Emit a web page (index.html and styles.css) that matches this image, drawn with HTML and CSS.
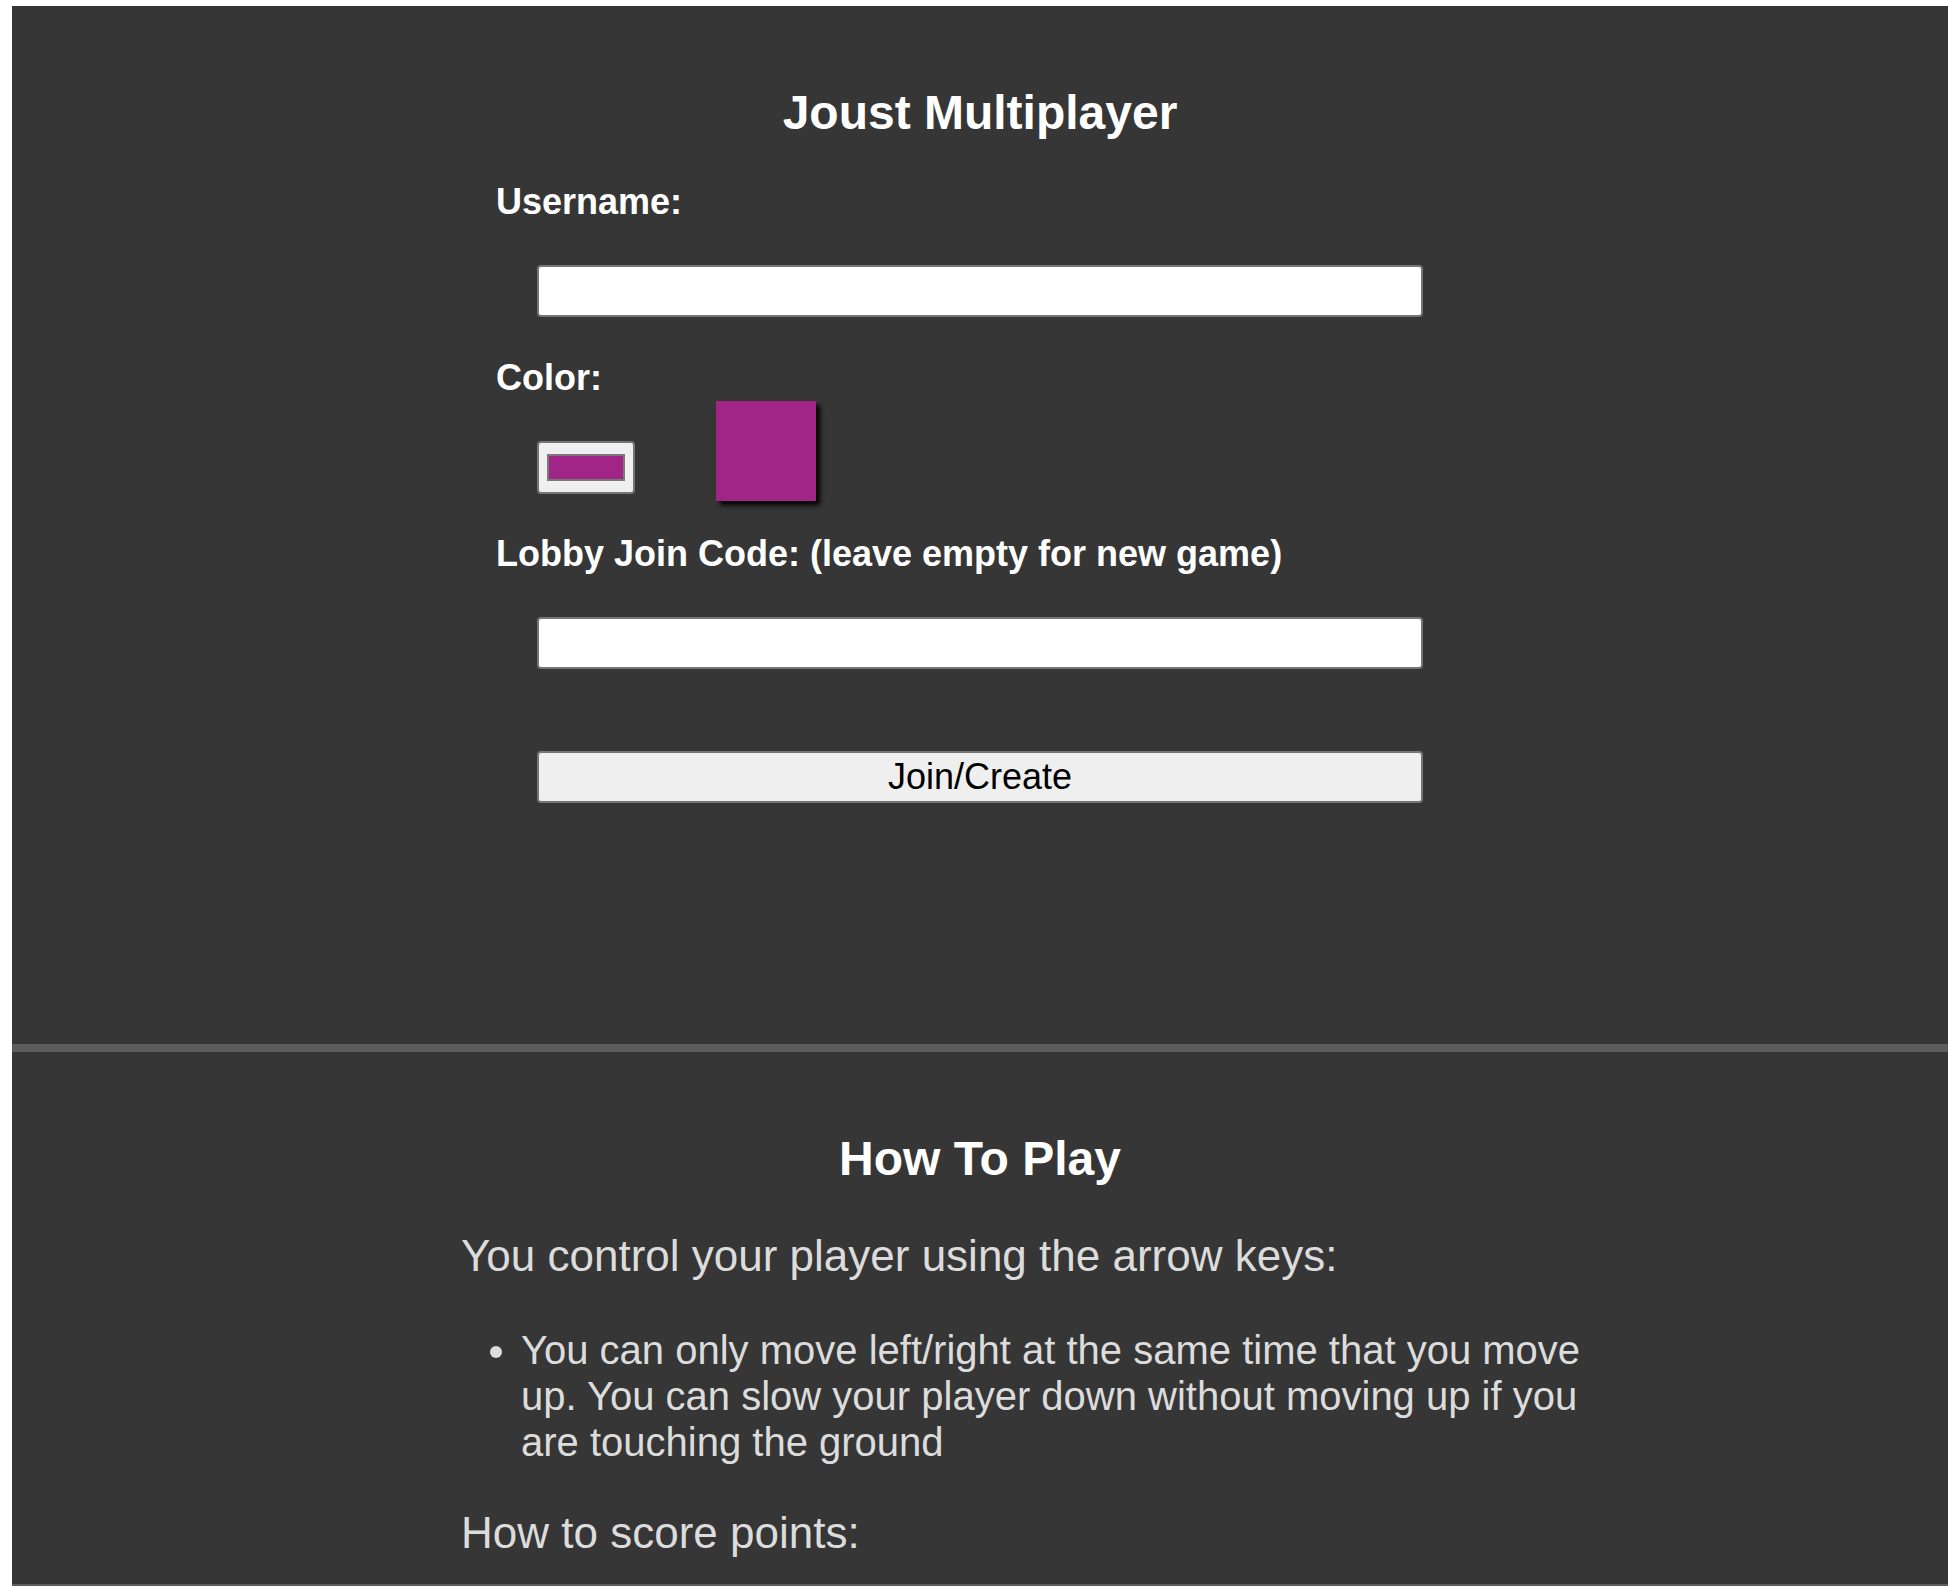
FILE: index.html
```html
<!DOCTYPE html>
<html lang="en">
<head>
<meta charset="utf-8">
<title>Joust Multiplayer</title>
<link rel="stylesheet" href="styles.css">
</head>
<body>
<main class="page">
  <section class="panel join-panel">
    <h1 class="panel-title">Joust Multiplayer</h1>
    <form class="join-form">
      <label class="field-label" for="username">Username:</label>
      <input class="text-input" id="username" type="text">

      <label class="field-label" for="color">Color:</label>
      <div class="color-row">
        <div class="color-input" id="color"><span class="color-swatch"></span></div>
        <div class="color-preview"></div>
      </div>

      <label class="field-label" for="lobby">Lobby Join Code: (leave empty for new game)</label>
      <input class="text-input" id="lobby" type="text">

      <button class="join-button" type="button">Join/Create</button>
    </form>
  </section>

  <section class="panel howto-panel">
    <h2 class="panel-title">How To Play</h2>
    <div class="howto-content">
      <p class="howto-text">You control your player using the arrow keys:</p>
      <ul class="howto-list">
        <li>You can only move left/right at the same time that you move up. You can slow your player down without moving up if you are touching the ground</li>
      </ul>
      <p class="howto-text">How to score points:</p>
    </div>
  </section>
</main>
</body>
</html>
```

FILE: styles.css
```css
html, body {
  margin: 0;
  padding: 0;
  background: #ffffff;
}

body {
  padding: 6px 10px 0 12px;
  font-family: "Liberation Sans", Arial, Helvetica, sans-serif;
}

.page {
  display: flex;
  flex-direction: column;
}

.panel {
  background: #363636;
  border-bottom: 8px solid #5c5c5c;
  color: #ffffff;
  box-sizing: border-box;
}

.panel-title {
  margin: 0;
  font-size: 48px;
  line-height: 56px;
  font-weight: bold;
  text-align: center;
  color: #ffffff;
}

/* ---------- Join panel ---------- */
.join-panel {
  height: 1046px;
  padding-top: 79px;
}

.join-form {
  width: 968px;
  margin: 40px auto 0;
  display: flex;
  flex-direction: column;
  align-items: flex-start;
}

.field-label {
  font-size: 36px;
  line-height: 42px;
  font-weight: bold;
  color: #ffffff;
}

.text-input {
  box-sizing: border-box;
  width: 886px;
  height: 52px;
  margin: 42px 0 40px 41px;
  background: #ffffff;
  border: 2px solid #767676;
  border-radius: 4px;
  padding: 0 8px;
  font-size: 36px;
  font-family: inherit;
}

.color-row {
  display: flex;
  align-items: flex-start;
  margin: 2px 0 32px 41px;
}

.color-input {
  box-sizing: border-box;
  width: 98px;
  height: 53px;
  margin-top: 40px;
  padding: 11px 8px;
  background: #efefef;
  border: 2px solid #767676;
  border-radius: 4px;
  display: flex;
}

.color-swatch {
  flex: 1;
  background: #a12487;
  border: 2px solid #7a7a7a;
}

.color-preview {
  width: 100px;
  height: 100px;
  margin-left: 81px;
  background: #a12487;
  box-shadow: 4px 4px 5px #000000;
}

.join-button {
  box-sizing: border-box;
  width: 886px;
  height: 52px;
  margin: 42px 0 0 41px;
  background: #efefef;
  border: 2px solid #767676;
  border-radius: 4px;
  color: #000000;
  font-family: inherit;
  font-size: 36px;
  line-height: 40px;
  padding: 0;
}

/* ---------- How to play panel ---------- */
.howto-panel {
  height: 540px;
  padding-top: 79px;
  overflow: hidden;
}

.howto-content {
  margin-left: 449px;
  width: 1140px;
  color: #dcdcdc;
}

.howto-text {
  margin: 44px 0 0;
  font-size: 44px;
  line-height: 50px;
}

.howto-list {
  margin: 46px 0 0;
  padding-left: 60px;
  font-size: 40px;
  line-height: 46px;
}

.howto-list + .howto-text {
  margin-top: 43px;
}
```
